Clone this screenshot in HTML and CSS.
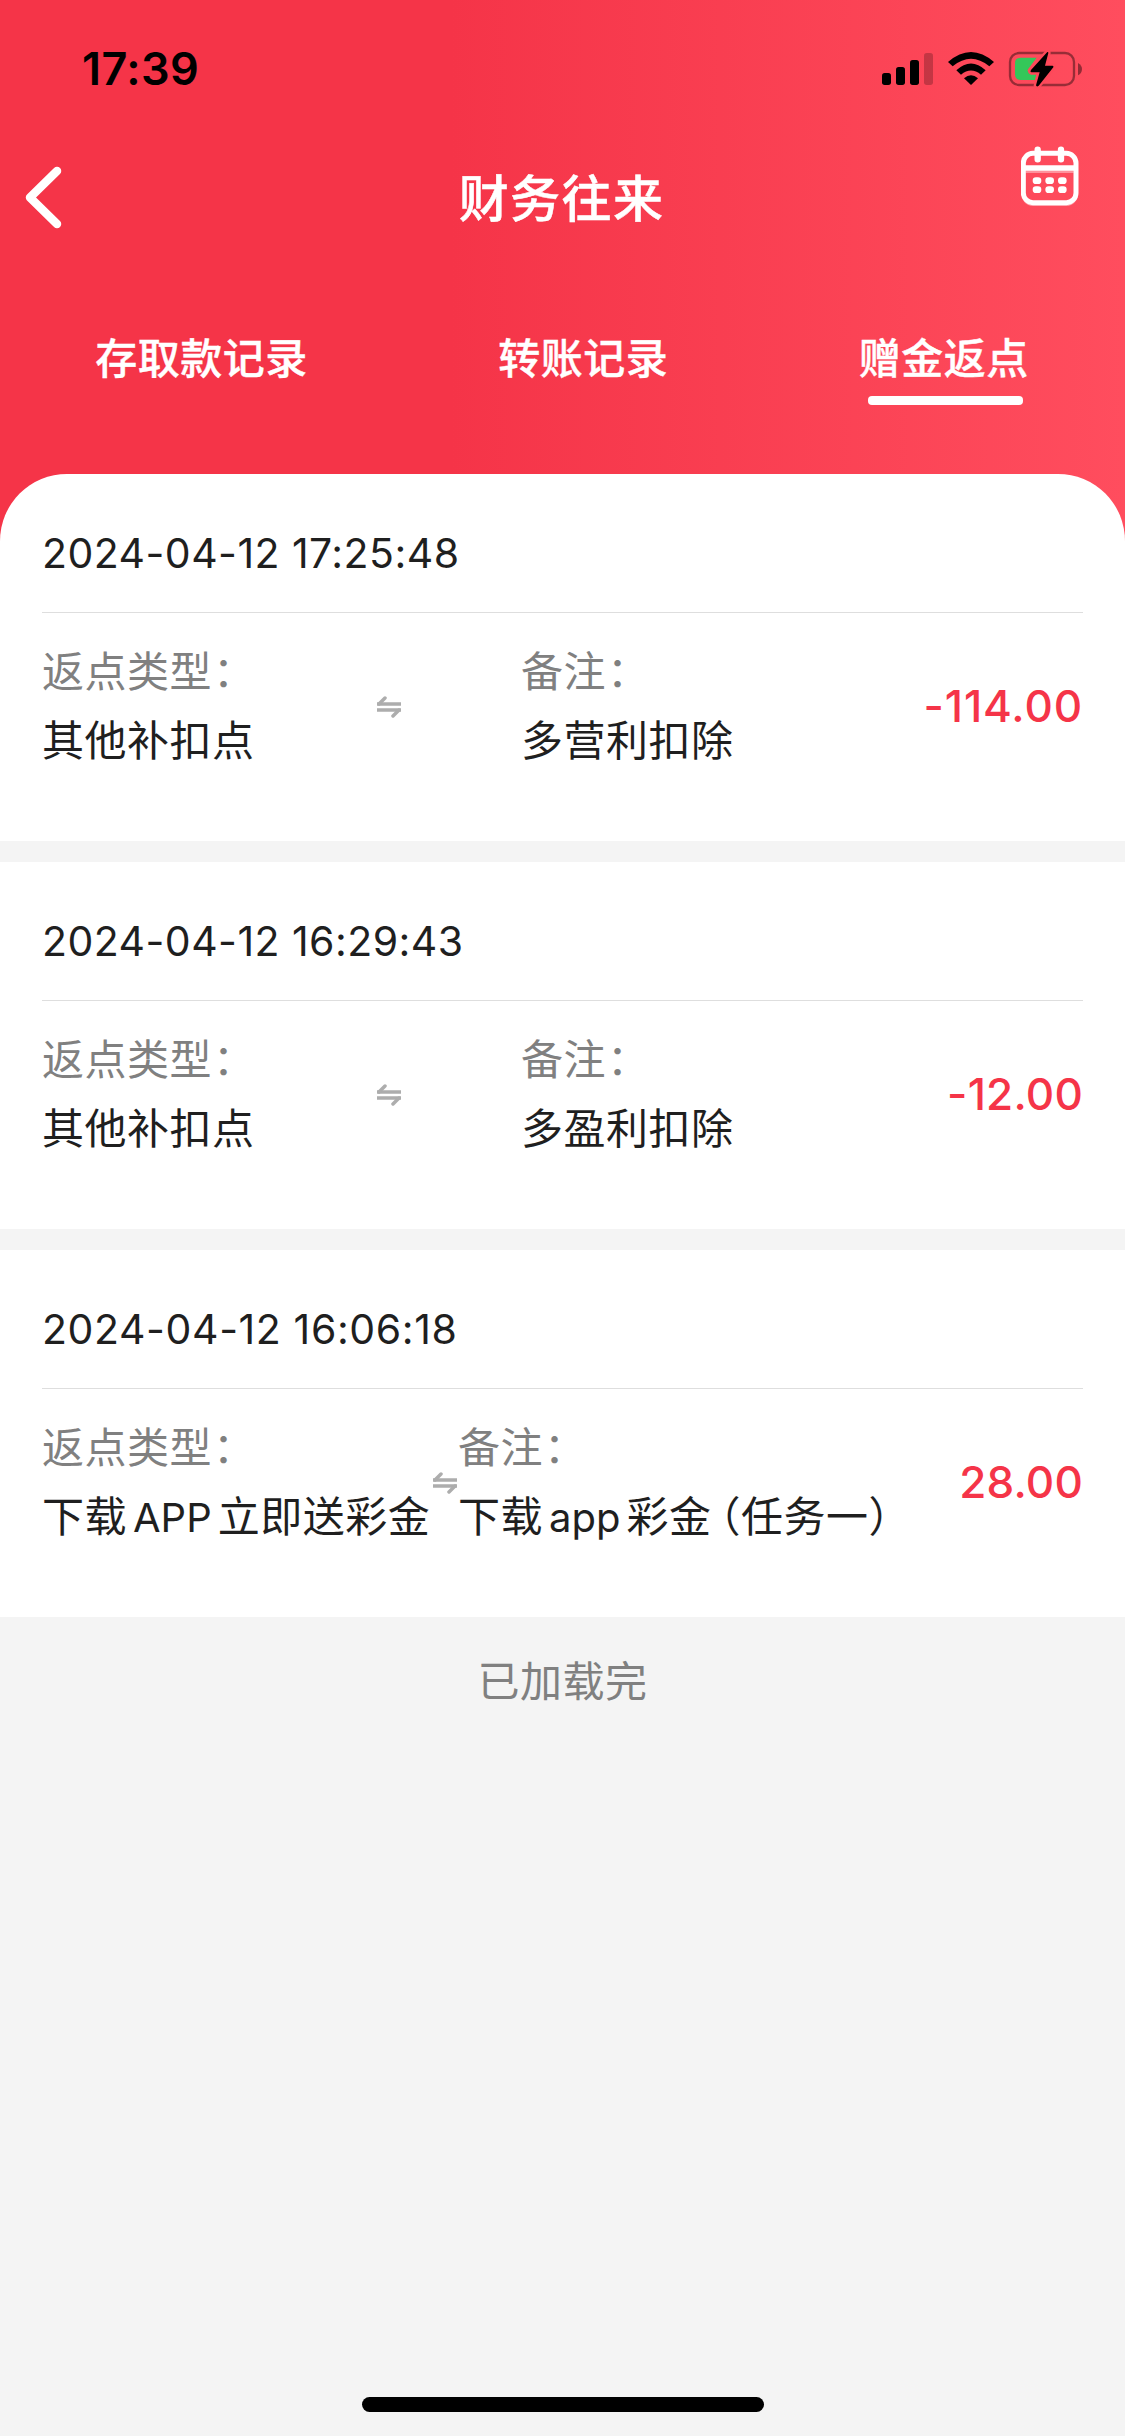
FILE: index.html
```html
<!DOCTYPE html>
<html lang="zh-CN">
<head>
<meta charset="utf-8">
<title>财务往来</title>
<link rel="stylesheet" href="styles.css">
</head>
<body>
<div class="screen">
  <header class="header">
    <div class="status">
      <span class="time">17:39</span>
      <svg class="status-icons" viewBox="66 60 606 114" width="202" height="38">
        <rect x="66" y="129" width="27" height="36" rx="8"/>
        <rect x="108" y="111" width="27" height="54" rx="8"/>
        <rect x="150" y="90" width="27" height="75" rx="8"/>
        <rect x="192" y="69" width="27" height="96" rx="8" opacity=".22"/>
        <path d="M264 96 Q333 36 402 96 L388 109 Q333 64 278 109 Z"/>
        <path d="M289 121 Q333 80 377 121 L363 134 Q333 109 303 134 Z"/>
        <path d="M312 145 Q333 127 354 145 L333 165 Z"/>
        <rect x="450" y="69" width="192" height="96" rx="27" fill="none" stroke="#000" stroke-opacity=".4" stroke-width="7"/>
        <path d="M654 99 Q666 106 666 117 Q666 130 654 136 Z" opacity=".42"/>
        <path d="M482 83 H530 L504 118 Q500 127 511 129 H530 L525 150 H482 Q465 150 465 133 V100 Q465 83 482 83 Z" fill="#34c759"/>
        <path d="M562 66 Q565 65 565 69 L555 107 H578 Q582 109 580 112 L536 167 Q530 172 528 166 L539 127 H514 Q509 125 513 120 Z" stroke="#fe4859" stroke-width="14" paint-order="stroke"/>
      </svg>
    </div>
    <nav class="navbar">
      <svg class="back" viewBox="0 0 38 64" width="38" height="64"><path d="M33 5 L6 31.500 L33 58" fill="none" stroke="#fff" stroke-width="8.500" stroke-linecap="round" stroke-linejoin="round"/></svg>
      <h1 class="title">财务往来</h1>
      <svg class="calendar" viewBox="484 348 174 180" width="58" height="60" fill="none" stroke="#fff">
        <path d="M490 500 Q496 522 520 525 H620 Q644 522 650 500 M498 425 H642" stroke-width="8" opacity=".4"/>
        <rect x="491" y="370" width="158" height="148" rx="29" stroke-width="15"/>
        <path d="M491 414 H649" stroke-width="16"/>
        <path d="M534 359 V388 M604 359 V388" stroke-width="19" stroke-linecap="round"/>
        <path d="M529 452 H535 M567 452 H573 M605 452 H611 M529 479 H535 M567 479 H573 M605 479 H611" stroke-width="20" stroke-linecap="round"/>
      </svg>
    </nav>
    <div class="tabs">
      <span class="tab">存取款记录</span>
      <span class="tab">转账记录</span>
      <span class="tab active">赠金返点</span>
    </div>
  </header>
  <main class="list">
    <section class="card">
      <div class="date">2024-04-12 17:25:48</div>
      <div class="row">
        <div class="field"><span class="label">返点类型<span class="colon">：</span></span><span>其他补扣点</span></div>
        <svg class="swap" viewBox="0 0 24 22" width="24" height="22"><path d="M0 8 H24 M24 14 H0" stroke-width="3.500"/><path d="M2 8 L8 2 M22 14 L16 20" stroke-width="3.500" stroke-linecap="round"/></svg>
        <div class="field"><span class="label">备注<span class="colon">：</span></span><span>多营利扣除</span></div>
        <span class="amount loose">-114.00</span>
      </div>
    </section>
    <section class="card">
      <div class="date">2024-04-12 16:29:43</div>
      <div class="row">
        <div class="field"><span class="label">返点类型<span class="colon">：</span></span><span>其他补扣点</span></div>
        <svg class="swap" viewBox="0 0 24 22" width="24" height="22"><path d="M0 8 H24 M24 14 H0" stroke-width="3.500"/><path d="M2 8 L8 2 M22 14 L16 20" stroke-width="3.500" stroke-linecap="round"/></svg>
        <div class="field"><span class="label">备注<span class="colon">：</span></span><span>多盈利扣除</span></div>
        <span class="amount">-12.00</span>
      </div>
    </section>
    <section class="card">
      <div class="date loose">2024-04-12 16:06:18</div>
      <div class="row wide">
        <div class="field"><span class="label">返点类型<span class="colon">：</span></span><span>下载<span class="latin">APP</span>立即送彩金</span></div>
        <svg class="swap" viewBox="0 0 24 22" width="24" height="22"><path d="M0 8 H24 M24 14 H0" stroke-width="3.500"/><path d="M2 8 L8 2 M22 14 L16 20" stroke-width="3.500" stroke-linecap="round"/></svg>
        <div class="field"><span class="label">备注<span class="colon">：</span></span><span>下载<span class="latin">app</span>彩金<span class="paren">（</span>任务一）</span></div>
        <span class="amount">28.00</span>
      </div>
    </section>
  </main>
  <p class="end">已加载完</p>
  <div class="home-bar"></div>
</div>
</body>
</html>
```
FILE: styles.css
```css
* { box-sizing: border-box; margin: 0; padding: 0; }
body { font-family: Inter, "Noto Sans CJK SC", sans-serif; font-size: 42px; color: #1f1f1f; background: #f4f4f4; }
svg { display: block; flex: none; }
.screen { width: 1125px; height: 2436px; display: flex; flex-direction: column; overflow: hidden; }
.header { height: 550px; flex: none; background: linear-gradient(90deg, #f53448 40%, #ff4d5e 100%); color: #fff; }
.status { height: 132px; padding: 0 41px 0 82px; display: flex; justify-content: space-between; color: #000; }
.time { font-size: 45px; font-weight: 600; line-height: 60px; margin-top: 39px; letter-spacing: .4px; }
.status-icons { margin-top: 50px; }
.navbar { height: 132px; display: grid; grid-template-columns: 1fr auto 1fr; padding: 0 46px 0 24px; }
.back { margin-top: 34px; }
.title { font-family: "Noto Sans CJK SC", sans-serif; font-size: 50px; font-weight: 500; line-height: 60px; margin: 33px 0 0 20px; letter-spacing: 1.4px; -webkit-text-stroke: .5px #fff; }
.calendar { margin-top: 14px; justify-self: end; }
.tabs { display: flex; justify-content: space-around; font-family: "Noto Sans CJK SC", sans-serif; font-weight: 500; padding: 62px 1px 0 0; letter-spacing: .5px; -webkit-text-stroke: .4px #fff; }
.tab { line-height: 60px; height: 80px; display: flex; flex-direction: column; align-items: center; }
.active::after { content: ""; width: 155px; height: 9px; margin: 10px 0 0 3px; border-radius: 4px; background: #fff; flex: none; }
.list { margin-top: -76px; display: flex; flex-direction: column; gap: 21px; }
.card { height: 367px; background: #fff; padding: 0 42px; }
.card:first-child { border-radius: 67px 67px 0 0; }
.date { height: 139px; padding-top: 49px; line-height: 60px; font-size: 41px; letter-spacing: .45px; border-bottom: 1px solid #dedede; }
.date.loose { letter-spacing: .6px; }
.row { display: grid; grid-template-columns: 335px 144px 1fr auto; padding-top: 24px; }
.wide { grid-template-columns: 391px 25px 1fr auto; }
.field { display: flex; flex-direction: column; line-height: 69px; letter-spacing: .5px; white-space: nowrap; }
.label { color: #808080; }
.colon { margin-left: 1px; }
.swap { margin-top: 59px; stroke: #adadad; fill: none; }
.latin { margin: 0 6px; font-size: 40px; letter-spacing: 0; }
.paren { margin-left: -13px; }
.amount { color: #f53448; font-size: 44px; font-weight: 500; line-height: 60px; margin-top: 39px; letter-spacing: .2px; }
.amount.loose { letter-spacing: .9px; }
.end { text-align: center; color: #808080; line-height: 60px; margin-top: 35px; letter-spacing: .5px; }
.home-bar { width: 402px; height: 15px; border-radius: 8px; background: #000; margin: auto auto 24px; }
```
